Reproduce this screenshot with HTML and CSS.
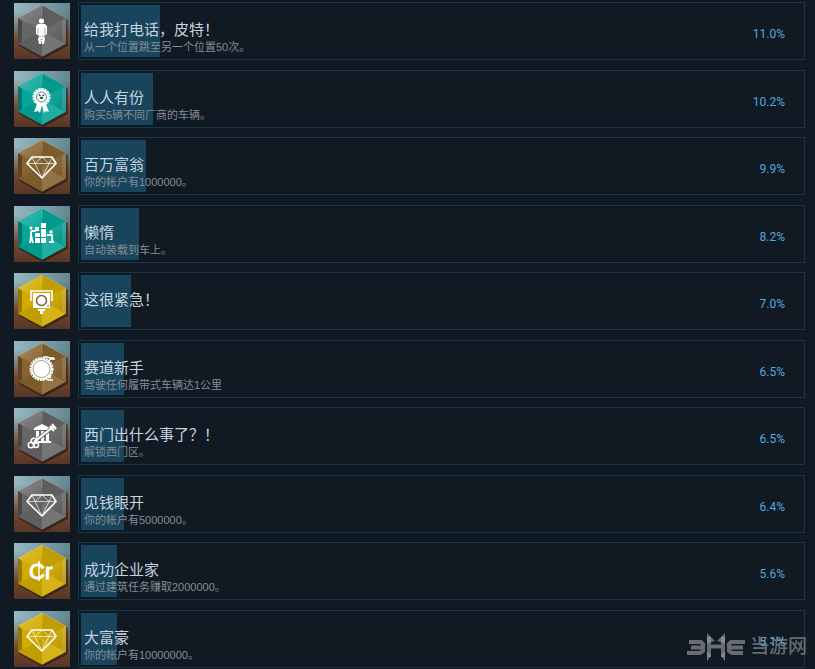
FILE: index.html
```html
<!DOCTYPE html>
<html lang="zh-CN">
<head>
<meta charset="utf-8">
<meta name="viewport" content="width=device-width, initial-scale=1">
<title>全球成就</title>
<link rel="stylesheet" href="styles.css">
</head>
<body>
<svg class="defs" aria-hidden="true">
  <defs>
    <linearGradient id="shade-light" x1="0" y1="0" x2="1" y2="1">
      <stop offset="0" stop-color="#fff" stop-opacity=".25"/>
      <stop offset="1" stop-color="#fff" stop-opacity="0"/>
    </linearGradient>
    <linearGradient id="shade-dark" x1="0" y1="0" x2="1" y2="1">
      <stop offset="0" stop-color="#fff" stop-opacity=".08"/>
      <stop offset="1" stop-color="#000" stop-opacity=".16"/>
    </linearGradient>
    <symbol id="gem" viewBox="0 0 56 56">
      <path d="M28 3 54 17V43L29 56 5 43z" fill="#000" opacity=".4"/>
      <path d="M28 2 52 15V41L28 54 4 41V15z" fill="currentColor"/>
      <path d="M28 2 4 15 28 28z" fill="url(#shade-light)"/>
      <path d="M28 2 52 15 28 28z" fill="#000" opacity=".08"/>
      <path d="M52 15V41L28 28z" fill="url(#shade-dark)"/>
      <path d="M52 41 28 54V28z" fill="#fff" opacity=".1"/>
      <path d="M28 54 4 41 28 28z" fill="#000" opacity=".08"/>
      <path d="M4 15 8 18V38L4 41z" fill="#000" opacity=".3"/>
      <path d="M52 15 48 18V38L52 41z" fill="#fff" opacity=".12"/>
      <path d="M4 15 28 2 52 15M28 2V12" fill="none" stroke="#fff" stroke-width=".7" opacity=".25"/>
      <path d="M4 41 28 54 52 41" fill="none" stroke="#000" stroke-width=".8" opacity=".35"/>
    </symbol>
    <symbol id="diamond" viewBox="0 0 56 56">
      <path d="M18 19H38L42 25.500 28 40 13 25.500z" fill="none" stroke="#fff" stroke-width="1.600" stroke-linejoin="round"/>
      <path d="M13 25.500H42M18 19 21 25.500 28 40 35 25.500 38 19M21 25.500 28 19 35 25.500" fill="none" stroke="#fff" stroke-width=".8" opacity=".85"/>
    </symbol>
  </defs>
</svg>

<ul class="achievements">
  <li class="achievement">
    <svg class="badge silver" viewBox="0 0 56 56" aria-hidden="true"><use href="#gem"/>
      <g fill="#fff"><circle cx="27.500" cy="18" r="2.600"/><path d="M24 21h7l2 2v8l-2 1-1 1 1 3-1 5h-2l-.5-4-.5 4h-2l-1-5 1-3-1-1-2-1v-8z"/></g>
      <path d="M24 25v6M31 25v6M25 33l2 1M29 32l-1 2M26 37l3-1" stroke="#777" stroke-width=".6"/>
    </svg>
    <div class="panel"><div class="fill" style="width:11%"></div>
      <div class="text"><h3 class="title">给我打电话，皮特！</h3><p class="desc">从一个位置跳至另一个位置50次。</p></div><span class="percent">11.0%</span></div>
  </li>
  <li class="achievement">
    <svg class="badge teal" viewBox="0 0 56 56" aria-hidden="true"><use href="#gem"/>
      <path d="M24 31 20 41l4-1 2 2 2-8 2 8 2-2 3 1-4-10z" fill="#fff"/>
      <circle cx="27.500" cy="26" r="8" fill="none" stroke="#fff" stroke-width="2" stroke-dasharray="2.500 .6"/>
      <circle cx="27.500" cy="26" r="7.500" fill="#fff"/>
      <circle cx="27.500" cy="26" r="5" fill="none" stroke="#397e78" stroke-width=".9"/>
      <path d="M25 23.500l5 5M30 23.500l-5 5" stroke="#244f4e" stroke-width="1.500" stroke-dasharray="2 1.500"/>
    </svg>
    <div class="panel"><div class="fill" style="width:10%"></div>
      <div class="text"><h3 class="title">人人有份</h3><p class="desc">购买5辆不同厂商的车辆。</p></div><span class="percent">10.2%</span></div>
  </li>
  <li class="achievement">
    <svg class="badge bronze" viewBox="0 0 56 56" aria-hidden="true"><use href="#gem"/><use href="#diamond"/></svg>
    <div class="panel"><div class="fill" style="width:9%"></div>
      <div class="text"><h3 class="title">百万富翁</h3><p class="desc">你的帐户有1000000。</p></div><span class="percent">9.9%</span></div>
  </li>
  <li class="achievement">
    <svg class="badge teal" viewBox="0 0 56 56" aria-hidden="true"><use href="#gem"/>
      <g fill="#fff"><rect x="27" y="17" width="5" height="5"/><rect x="21" y="27" width="5" height="4"/><rect x="21" y="32" width="5" height="5"/><rect x="27" y="23" width="5" height="8"/><rect x="27" y="32" width="5" height="5"/><rect x="21" y="21" width="4" height="4"/><circle cx="17" cy="22" r="1.500"/><circle cx="37" cy="26" r="1.700"/></g>
      <path d="M17 25v5l-1 7M17 29l2 8M17 25h5M38 28v5l1 3h-4M38 29h-5" fill="none" stroke="#fff" stroke-width="1.800"/>
    </svg>
    <div class="panel"><div class="fill" style="width:8%"></div>
      <div class="text"><h3 class="title">懒惰</h3><p class="desc">自动装载到车上。</p></div><span class="percent">8.2%</span></div>
  </li>
  <li class="achievement">
    <svg class="badge gold" viewBox="0 0 56 56" aria-hidden="true"><use href="#gem"/>
      <path d="M17 28V18H38V28" fill="none" stroke="#fff" stroke-width="1.600"/>
      <path d="M19 20H36V35H19zM24 36h7v2h-2v3h-3v-3h-2z" fill="#fff"/>
      <circle cx="27.500" cy="27.500" r="5" fill="none" stroke="#726638" stroke-width="1.500"/>
      <circle cx="34" cy="33" r=".8" fill="#504722"/>
    </svg>
    <div class="panel"><div class="fill" style="width:7%"></div>
      <div class="text"><h3 class="title">这很紧急！</h3></div><span class="percent">7.0%</span></div>
  </li>
  <li class="achievement">
    <svg class="badge bronze" viewBox="0 0 56 56" aria-hidden="true"><use href="#gem"/>
      <circle cx="27.500" cy="28" r="11" fill="none" stroke="#fff" stroke-width="2" stroke-dasharray="2 .8"/>
      <circle cx="27.500" cy="28" r="10.500" fill="#fff"/>
      <circle cx="27.500" cy="28" r="8.500" fill="none" stroke="#8b8174" stroke-width=".8"/>
      <path d="M29 16h4l3 1h4M34 20l3-2h4M32 38l3 1h4M35 35l2 2" fill="none" stroke="#fff" stroke-width="1.500"/>
    </svg>
    <div class="panel"><div class="fill" style="width:6%"></div>
      <div class="text"><h3 class="title">赛道新手</h3><p class="desc">驾驶任何履带式车辆达1公里</p></div><span class="percent">6.5%</span></div>
  </li>
  <li class="achievement">
    <svg class="badge silver" viewBox="0 0 56 56" aria-hidden="true"><use href="#gem"/>
      <path d="M20 20 28 16 36 20v2H20zM22 23h3v10h-3zM27 23h3v10h-3zM32 23h3v10h-3zM20 33h17v2H20z" fill="#fff"/>
      <path d="M20 34 38 20" stroke="#666" stroke-width="3.500"/>
      <path d="M20 34 39 19M36 18l4 5M38 16l4 5" stroke="#fff" stroke-width="2.200"/>
      <g fill="none" stroke="#fff" stroke-width="1.500"><circle cx="20" cy="33" r="2.800"/><circle cx="17" cy="37" r="2.800"/><circle cx="22" cy="37" r="2.500"/></g>
    </svg>
    <div class="panel"><div class="fill" style="width:6%"></div>
      <div class="text"><h3 class="title">西门出什么事了？！</h3><p class="desc">解锁西门区。</p></div><span class="percent">6.5%</span></div>
  </li>
  <li class="achievement">
    <svg class="badge silver" viewBox="0 0 56 56" aria-hidden="true"><use href="#gem"/><use href="#diamond"/></svg>
    <div class="panel"><div class="fill" style="width:6%"></div>
      <div class="text"><h3 class="title">见钱眼开</h3><p class="desc">你的帐户有5000000。</p></div><span class="percent">6.4%</span></div>
  </li>
  <li class="achievement">
    <svg class="badge gold" viewBox="0 0 56 56" aria-hidden="true"><use href="#gem"/>
      <text class="credit" x="15" y="36">Cr</text>
      <path d="M25 18V38" stroke="#fff" stroke-width="1.500"/>
    </svg>
    <div class="panel"><div class="fill" style="width:5%"></div>
      <div class="text"><h3 class="title">成功企业家</h3><p class="desc">通过建筑任务赚取2000000。</p></div><span class="percent">5.6%</span></div>
  </li>
  <li class="achievement">
    <svg class="badge gold" viewBox="0 0 56 56" aria-hidden="true"><use href="#gem"/><use href="#diamond"/></svg>
    <div class="panel"><div class="fill" style="width:5%"></div>
      <div class="text"><h3 class="title">大富豪</h3><p class="desc">你的帐户有10000000。</p></div><span class="percent">5.1%</span>
      <div class="watermark">
        <svg class="mark" viewBox="0 0 60 28" aria-hidden="true">
          <g fill="none" stroke="currentColor" stroke-width="4">
            <path d="M3 9H15L17 11V18L14 20H1M5 14.500H17"/>
            <path d="M23 4V24M23 13.500H37M37 4V24"/>
            <path d="M59 9H45L43 11V18L46 20H57M43 14.500H57"/>
          </g>
          <path d="M21 0 29 8 21 10zM39 0 31 8 39 10zM21 28 25 23 21 18zM39 28 35 23 39 18z" fill="currentColor"/>
        </svg>
        <span>当游网</span>
      </div></div>
  </li>
</ul>
</body>
</html>
```
FILE: styles.css
```css
* {
  box-sizing: border-box;
}

body {
  margin: 0;
  padding: 2px 10px 0 14px;
  background: #111922;
  color: #c6d4df;
  font-family: "Liberation Sans", "Noto Sans CJK SC", sans-serif;
}

.defs {
  position: absolute;
  width: 0;
  height: 0;
}

.achievements {
  margin: 0;
  padding: 0;
  list-style: none;
}

.achievement {
  display: flex;
  align-items: center;
  gap: 8px;
  margin-bottom: 10px;
}

.achievement:nth-child(even) {
  margin-bottom: 9px;
}

.achievement:last-child {
  margin-bottom: 0;
}

.badge {
  flex: none;
  width: 56px;
  height: 56px;
  background:
    linear-gradient(to bottom, transparent 15%, #75492f 65%, #573526),
    linear-gradient(to right, #95b9c1, #648791);
}

.silver { color: #666; }
.teal { color: #06a598; }
.bronze { color: #87632f; }
.gold { color: #d3ab00; }

.credit {
  fill: #fff;
  stroke: #fff;
  stroke-width: 1px;
  font: 22px "Liberation Sans", sans-serif;
}

.panel {
  position: relative;
  display: flex;
  flex: 1;
  justify-content: space-between;
  min-height: 58px;
  padding: 2px;
  border: 1px solid #14384a;
}

.fill {
  flex: none;
  background: #18445c;
}

.text {
  position: absolute;
  top: 17px;
  left: 5px;
}

.title,
.desc {
  margin: 0;
  font-weight: 400;
  white-space: nowrap;
}

.title {
  font-size: 15px;
  line-height: 20px;
}

.desc {
  color: #838d96;
  font-size: 11px;
  line-height: 14px;
}

.percent {
  padding: 22px 17px 0 0;
  color: #55a9df;
  font-family: Roboto, "Liberation Sans", sans-serif;
  font-size: 12px;
  line-height: 14px;
}

.watermark {
  position: absolute;
  right: -3px;
  bottom: 6px;
  display: flex;
  align-items: center;
  gap: 4px;
  color: rgb(150 155 160 / 65%);
  font-size: 19px;
  font-weight: 500;
  line-height: 28px;
}

.mark {
  width: 60px;
  height: 28px;
}
```
